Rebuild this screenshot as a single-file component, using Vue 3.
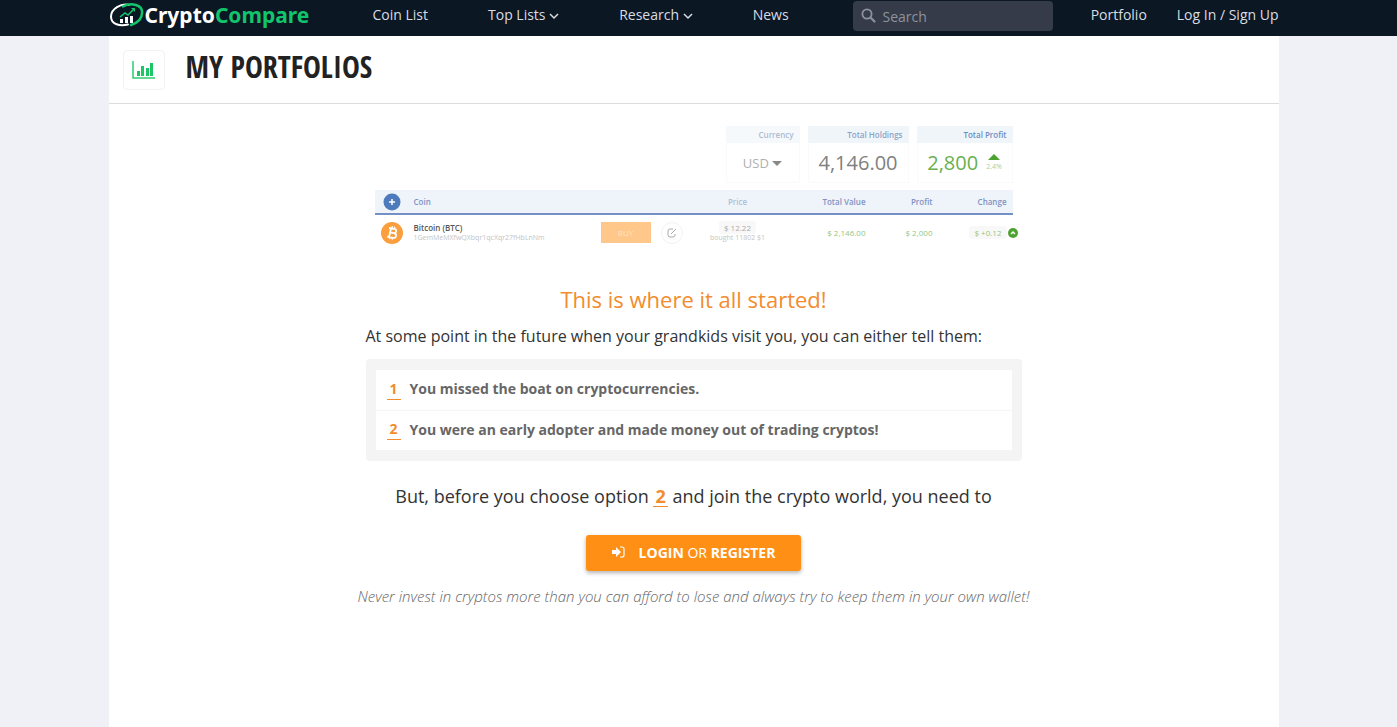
<template>
  <header class="topbar">
    <div class="container topbar-inner">
      <a href="#" class="logo">
        <svg width="36" height="26" viewBox="0 0 36 26" aria-hidden="true">
          <g fill="none" stroke-linecap="round">
            <path d="M20 3C12 1 2 7 2 14.500c0 8 9 10 17 8" stroke="#fff" stroke-width="2" />
            <path d="M14 4.500C22 0 34 3 33 11c0 6-5 10-11 12" stroke="#12c46b" stroke-width="2.500" />
          </g>
          <path d="M11 17h3v4h-3zM16 15h3v6h-3zM21 14h3v7h-3z" fill="#fff" />
          <path d="M11 15l5-4 3 2 5-5" fill="none" stroke="#12c46b" stroke-width="1.500" />
          <path d="M22 6h4v4z" fill="#12c46b" />
        </svg>
        <span class="logo-text">Crypto<span class="logo-green">Compare</span></span>
      </a>
      <nav class="main-nav">
        <a v-for="item in navItems" :key="item.label" href="#">
          {{ item.label }}
          <svg v-if="item.menu" width="10" height="8" viewBox="0 0 10 8" aria-hidden="true">
            <path d="M1 2l4 4 4-4" fill="none" stroke="currentColor" stroke-width="1.500" />
          </svg>
        </a>
      </nav>
      <div class="search">
        <svg width="16" height="16" viewBox="0 0 16 16" aria-hidden="true">
          <circle cx="6" cy="6" r="4.6" fill="none" stroke="#8e929b" stroke-width="1.800" />
          <path d="M9.500 9.500l4 4" stroke="#8e929b" stroke-width="2.200" stroke-linecap="round" />
        </svg>
        <input v-model="query" type="text" placeholder="Search" aria-label="Search" />
      </div>
      <nav class="user-nav">
        <a href="#">Portfolio</a>
        <a href="#">Log In / Sign Up</a>
      </nav>
    </div>
  </header>

  <main>
    <div class="container page">
      <div class="page-title">
        <div class="title-icon">
          <svg width="24" height="20" viewBox="0 0 24 20" aria-hidden="true">
            <path d="M1 1v17h22" fill="none" stroke="#2ecc71" stroke-width="1.500" />
            <path d="M5 11h3v5H5zM9 6h3v10H9zM14 8h3v8h-3zM18 3h3v13h-3z" fill="#1cc566" />
          </svg>
        </div>
        <h1>MY PORTFOLIOS</h1>
      </div>

      <section class="preview">
        <div class="cards">
          <div class="card currency">
            <div class="card-head">Currency</div>
            <div class="card-body">
              <span class="usd">USD <i class="caret"></i></span>
            </div>
          </div>
          <div class="card holdings">
            <div class="card-head">Total Holdings</div>
            <div class="card-body">4,146.00</div>
          </div>
          <div class="card profit">
            <div class="card-head">Total Profit</div>
            <div class="card-body">
              2,800
              <span class="rise"><i class="up"></i>2.4%</span>
            </div>
          </div>
        </div>

        <table>
          <thead>
            <tr>
              <th class="c-icon">
                <svg width="18" height="18" viewBox="0 0 18 18" aria-hidden="true">
                  <circle cx="9" cy="9" r="8.5" fill="#4f7abb" />
                  <path d="M9 6v6M6 9h6" stroke="#fff" stroke-width="1.500" />
                </svg>
              </th>
              <th class="c-coin">Coin</th>
              <th class="c-buy"></th>
              <th class="c-edit"></th>
              <th class="c-price">Price</th>
              <th class="c-total">Total Value</th>
              <th class="c-gain">Profit</th>
              <th class="c-change">Change</th>
            </tr>
          </thead>
          <tbody>
            <tr>
              <td class="c-icon">
                <svg width="22" height="22" viewBox="0 0 22 22" aria-hidden="true">
                  <circle cx="11" cy="11" r="11" fill="#fb9f3e" />
                  <g transform="rotate(12 11 11)" fill="none" stroke="#fff" stroke-width="1.800">
                    <path d="M7 6.500h5.500c3 0 3 4.200 0 4.200H9h4c3.500 0 3.500 4.800 0 4.800H7M9 6.500v9" />
                    <path d="M10 4.300v2M12.500 4.300v2M10 15.500v2M12.500 15.500v2" stroke-width="1.300" />
                  </g>
                </svg>
              </td>
              <td class="c-coin">
                <b>Bitcoin (BTC)</b>
                <small>1GemMeMXfwQXbqr1qcXqr27fHbLnNm</small>
              </td>
              <td class="c-buy"><button type="button" class="buy">BUY</button></td>
              <td class="c-edit">
                <button type="button" class="edit" aria-label="Edit">
                  <svg width="10" height="10" viewBox="0 0 10 10" aria-hidden="true">
                    <path d="M6 1H3Q1 1 1 3v4q0 2 2 2h3q2 0 2-2V6M4 6l5-5" fill="none" stroke="#aaa" />
                  </svg>
                </button>
              </td>
              <td class="c-price">
                <span class="pill">$ 12.22</span>
                <small>bought 11802 $1</small>
              </td>
              <td class="c-total">$ 2,146.00</td>
              <td class="c-gain">$ 2,000</td>
              <td class="c-change">
                <span class="pill">$ +0.12</span>
                <svg class="badge" width="10" height="10" viewBox="0 0 10 10" aria-hidden="true">
                  <circle cx="5" cy="5" r="5" fill="#4da32f" />
                  <path d="M3 6l2-2 2 2" fill="none" stroke="#fff" stroke-width="1.500" />
                </svg>
              </td>
            </tr>
          </tbody>
        </table>
      </section>

      <section class="intro">
        <h2>This is where it all started!</h2>
        <p class="lead">At some point in the future when your grandkids visit you, you can either tell them:</p>
        <ol class="options">
          <li v-for="(option, i) in options" :key="option">
            <span class="num">{{ i + 1 }}</span>{{ option }}
          </li>
        </ol>
        <p class="choose">But, before you choose option <b>2</b> and join the crypto world, you need to</p>
        <button type="button" class="login">
          <svg width="13" height="12" viewBox="0 0 13 12" aria-hidden="true">
            <path d="M0 4h4V1l5 5-5 5V8H0z" fill="#fff" />
            <path d="M8 1h2q2 0 2 2v6q0 2-2 2H8" fill="none" stroke="#fff" stroke-width="1.200" />
          </svg>
          <span><b>LOGIN</b> OR <b>REGISTER</b></span>
        </button>
        <p class="note">Never invest in cryptos more than you can afford to lose and always try to keep them in your own wallet!</p>
      </section>
    </div>
  </main>
</template>

<script setup>
import { ref } from 'vue';

const query = ref('');

const navItems = [
  { label: 'Coin List' },
  { label: 'Top Lists', menu: true },
  { label: 'Research', menu: true },
  { label: 'News' }
];

const options = [
  'You missed the boat on cryptocurrencies.',
  'You were an early adopter and made money out of trading cryptos!'
];
</script>

<style>
body {
  background: #f0f0f7;
  font-family: "Open Sans", "Liberation Sans", sans-serif;
}

#app {
  min-height: 100vh;
  display: flex;
  flex-direction: column;
}
</style>

<style scoped>
* {
  box-sizing: border-box;
}

a {
  color: inherit;
  text-decoration: none;
}

button,
input {
  font-family: inherit;
}

.topbar,
main {
  padding-right: 10px;
}

.topbar {
  background: #0b1723;
}

main {
  flex: 1;
  display: flex;
}

.container {
  width: 100%;
  max-width: 1170px;
  margin: 0 auto;
}

.topbar-inner {
  height: 36px;
  display: flex;
  align-items: flex-start;
  font-size: 14px;
  line-height: 30px;
  color: #d9dde2;
}

.logo {
  display: flex;
  align-items: center;
  width: 264px;
  height: 30px;
}

.logo-text {
  font-family: "Noto Sans", sans-serif;
  font-size: 21px;
  font-weight: 700;
  line-height: 28px;
  color: #fff;
}

.logo-green {
  color: #12c46b;
}

.main-nav {
  display: flex;
  gap: 60px;
  width: 480px;
}

.user-nav {
  display: flex;
  gap: 30px;
  margin-left: auto;
}

.search {
  display: flex;
  align-items: center;
  width: 200px;
  height: 30px;
  margin-top: 1px;
  padding: 0 8px;
  background: #353b48;
  border-radius: 4px;
}

.search input {
  width: 100%;
  margin-left: 6px;
  padding: 0;
  border: none;
  outline: none;
  background: transparent;
  color: #fff;
  font-size: 14px;
}

.search input::placeholder {
  color: #8e929b;
  opacity: 1;
}

.page {
  background: #fff;
}

.page-title {
  display: flex;
  align-items: center;
  gap: 21px;
  height: 68px;
  padding: 0 14px;
  border-bottom: 1px solid #dcdcdc;
}

.title-icon {
  display: flex;
  align-items: center;
  justify-content: center;
  width: 42px;
  height: 40px;
  border: 1px solid #f2f2f2;
  border-radius: 4px;
}

h1 {
  margin: 0 0 6px;
  font-family: "Open Sans Condensed", "Liberation Sans Narrow", "Open Sans", sans-serif;
  font-size: 30px;
  font-weight: 700;
  color: #222;
}

.preview {
  width: 638px;
  margin: 22px auto 0;
}

.cards {
  display: flex;
  justify-content: flex-end;
  gap: 8px;
}

.card-head {
  height: 17px;
  padding-right: 6px;
  background: #f0f5fa;
  font-size: 8px;
  font-weight: 600;
  line-height: 17px;
  text-align: right;
  color: #8ba4c8;
}

.card-body {
  display: flex;
  align-items: center;
  justify-content: center;
  gap: 8px;
  height: 40px;
  border: 1px solid #fafafa;
  border-top: none;
  font-size: 20px;
  color: #808080;
}

.currency {
  width: 74px;
}

.currency .card-head {
  background: #f6f9fc;
  color: #adbbd2;
}

.currency .card-body {
  font-size: 13px;
  color: #b0b0b0;
}

.holdings {
  width: 101px;
}

.profit {
  width: 96px;
}

.profit .card-head {
  color: #6c8ec0;
}

.profit .card-body {
  color: #69af4f;
}

.caret,
.up {
  display: inline-block;
  border: 5px solid transparent;
}

.caret {
  border-top-color: #888;
  border-bottom: none;
  margin-bottom: 2px;
}

.rise {
  display: flex;
  flex-direction: column;
  align-items: center;
  gap: 3px;
  font-size: 7px;
  line-height: 8px;
  color: #a9cf9b;
}

.up {
  border-width: 6px;
  border-bottom-color: #4da32f;
  border-top: none;
}

table {
  width: 100%;
  margin-top: 7px;
  table-layout: fixed;
  border-collapse: collapse;
  font-size: 8px;
  line-height: 10px;
}

th,
td {
  padding: 0;
  text-align: left;
  font-weight: 600;
}

th {
  height: 24px;
  background: #eef4f9;
  border-bottom: 2px solid #7490c4;
  color: #7f93c4;
}

td {
  height: 36px;
  color: #94c683;
  font-weight: 400;
}

svg {
  display: block;
  flex: none;
}

.main-nav svg {
  display: inline-block;
}

.c-icon {
  width: 39px;
}

.c-icon svg {
  margin: 0 auto;
}

td.c-icon,
th.c-icon {
  padding-right: 5px;
}

.c-coin {
  width: 187px;
}

.c-coin b,
small {
  display: block;
}

.c-coin b {
  font-weight: 600;
  color: #555;
}

small {
  font-size: 7px;
  white-space: nowrap;
  color: #c4c4c4;
}

.c-buy {
  width: 60px;
}

.c-edit {
  width: 40px;
}

.c-price {
  width: 74px;
  text-align: center;
}

th.c-price {
  color: #b0bfd7;
}

.c-total {
  width: 91px;
  text-align: right;
}

.c-gain {
  width: 67px;
  text-align: right;
}

.c-change {
  position: relative;
  width: 80px;
  padding-right: 6px;
  text-align: right;
}

.buy {
  display: block;
  width: 50px;
  height: 21px;
  padding: 0;
  border: none;
  background: #ffc78a;
  color: #ffe3c4;
  font-size: 8px;
}

.edit {
  display: flex;
  align-items: center;
  justify-content: center;
  width: 22px;
  height: 22px;
  padding: 0;
  border: 1px solid #f2f2f2;
  border-radius: 50%;
  background: #fff;
}

.pill {
  padding: 1px 5px;
  border-radius: 3px;
  background: #f8f8f8;
}

.c-price .pill {
  color: #aaa;
}

.badge {
  position: absolute;
  top: 13px;
  right: -5px;
}

.intro {
  width: 656px;
  margin: 34px auto 0;
  text-align: center;
}

h2 {
  margin: 0;
  font-size: 22px;
  font-weight: 400;
  line-height: 30px;
  color: #f28c2e;
}

p {
  margin: 0;
}

.lead {
  margin-top: 10px;
  font-size: 16px;
  line-height: 24px;
  text-align: left;
  color: #333;
}

.options {
  margin: 11px 0 0;
  padding: 11px 10px;
  list-style: none;
  background: #f4f4f4;
  border-radius: 4px;
  text-align: left;
  font-size: 14px;
  font-weight: 700;
  line-height: 20px;
  color: #666;
}

li {
  display: flex;
  align-items: center;
  gap: 9px;
  height: 40px;
  padding: 0 11px 2px;
  background: #fff;
}

li + li {
  border-top: 1px solid #f6f6f6;
}

.num {
  width: 14px;
  border-bottom: 1px solid #f28c2e;
  text-align: center;
  color: #f28c2e;
}

.choose {
  margin-top: 22px;
  font-size: 18px;
  line-height: 26px;
  white-space: nowrap;
  color: #333;
}

.choose b {
  padding: 0 2px;
  border-bottom: 1px solid #f28c2e;
  line-height: 20px;
  display: inline-block;
  color: #f28c2e;
}

.login {
  display: flex;
  align-items: center;
  justify-content: center;
  gap: 14px;
  width: 215px;
  height: 36px;
  margin: 26px auto 0;
  padding: 0 0 2px;
  border: none;
  border-radius: 3px;
  background: #ff9015;
  box-shadow: 0 2px 4px rgba(0, 0, 0, 0.3);
  font-size: 14px;
  color: #fff;
  cursor: pointer;
}

.note {
  display: flex;
  justify-content: center;
  margin-top: 13px;
  font-size: 15px;
  font-weight: 350;
  font-style: italic;
  line-height: 24px;
  white-space: nowrap;
  color: #666;
}
</style>
